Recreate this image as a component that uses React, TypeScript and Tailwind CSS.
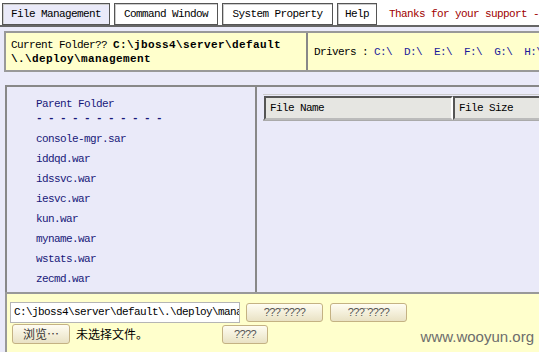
import React from "react";

const mono = "font-['Liberation_Mono','DejaVu_Sans_Mono',monospace] text-[11px] tracking-[-0.6px]";

const tabs = [
  { label: "File Management", w: "w-[108px]", active: true },
  { label: "Command Window", w: "w-[104px]", active: false },
  { label: "System Property", w: "w-[111px]", active: false },
  { label: "Help", w: "w-[40px]", active: false },
];

const files = [
  "console-mgr.sar",
  "iddqd.war",
  "idssvc.war",
  "iesvc.war",
  "kun.war",
  "myname.war",
  "wstats.war",
  "zecmd.war",
];

const drives = ["C:\\", "D:\\", "E:\\", "F:\\", "G:\\", "H:\\"];

const OldButton = ({ children, w }: { children: React.ReactNode; w: string }) => (
  <button
    className={`${w} h-[19px] rounded-[3px] border border-[#c4b283] bg-gradient-to-b from-[#fffdf2] to-[#e9e2c4] text-[#555] text-[11px] font-['Liberation_Sans',Arial,sans-serif] leading-none flex items-center justify-center shrink-0`}
  >
    {children}
  </button>
);

export default function App() {
  return (
    <div className={`relative w-[539px] h-[352px] overflow-hidden bg-[#eaeaf9] text-black ${mono}`}>
      {/* tab bar */}
      <div className="h-[27px] bg-white border-b-2 border-[#666] flex items-start pt-[3px] pl-[2px] gap-[4px] whitespace-nowrap">
        {tabs.map((t) => (
          <div
            key={t.label}
            className={`${t.w} h-[22px] shrink-0 border border-[#555] shadow-[inset_1px_1px_0_#ccc] flex items-center justify-center ${
              t.active ? "bg-[#eaeaf9]" : "bg-white"
            }`}
          >
            {t.label}
          </div>
        ))}
        <div className="ml-[8px] h-[22px] flex items-center text-[#a00000] whitespace-pre">
          Thanks for your support - zecmd
        </div>
      </div>

      {/* current folder */}
      <div className="mt-[4px] ml-[4px] w-[560px] h-[41px] border-2 border-[#999] border-r-0 bg-[#ffffcc] flex">
        <div className="w-[300px] pl-[5px] pt-[5px] leading-[14px]">
          <div className="whitespace-pre">
            Current Folder?? <b className="tracking-[0.4px]">C:\jboss4\server\default</b>
          </div>
          <b className="block tracking-[0.4px]">\.\deploy\management</b>
        </div>
        <div className="flex-1 border-l-2 border-[#888] flex items-center pl-[6px] pt-[2px] whitespace-pre">
          <span>Drivers : </span>
          {drives.map((d) => (
            <span key={d} className="text-[#1b1b9a]">
              {d}{"  "}
            </span>
          ))}
        </div>
      </div>

      {/* browser area */}
      <div className="mt-[13px] ml-[5px] w-[560px] h-[207px] border-t-2 border-l-2 border-[#888] flex">
        <div className="w-[250px] border-r-2 border-[#888] pl-[29px] pt-[8px] text-[#18187a]">
          <div className="h-[18px] flex items-center">Parent Folder</div>
          <div className="h-[10px] flex items-center whitespace-pre font-bold">- - - - - - - - - - -</div>
          <div className="pt-[6px]">
            {files.map((f) => (
              <div key={f} className="h-[20px] flex items-center">
                {f}
              </div>
            ))}
          </div>
        </div>
        <div className="flex-1 pl-[6px] pt-[7px]">
          <div className="flex h-[27px] border-b-2 border-[#aaa] border-t border-t-[#ccc] pt-[1px] pl-[1px]">
            <div className="w-[189px] h-[24px] bg-[#e6e6e2] border-2 border-[#555] border-r-[#fff] border-b-[#bbb] flex items-center pl-[4px]">
              File Name
            </div>
            <div className="flex-1 h-[24px] bg-[#e6e6e2] border-2 border-[#555] border-r-0 border-b-[#bbb] flex items-center pl-[4px]">
              File Size
            </div>
          </div>
        </div>
      </div>

      {/* upload area */}
      <div className="ml-[5px] w-[560px] h-[62px] border-t-2 border-l-2 border-[#999] bg-[#ffffcc] pl-[3px] pt-[8px]">
        <div className="flex items-center gap-[6px]">
          <div className="w-[230px] h-[21px] bg-white border border-[#b5b5b5] flex items-center pl-[3px] overflow-hidden whitespace-nowrap">
            C:\jboss4\server\default\.\deploy\manag
          </div>
          <OldButton w="w-[77px]">???¨????</OldButton>
          <div className="ml-[1px]">
            <OldButton w="w-[77px]">???¨????</OldButton>
          </div>
        </div>
        <div className="flex items-center mt-[1px] pl-[2px]">
          <div className="w-[210px] flex items-center gap-[6px] font-['Noto_Sans_CJK_SC',sans-serif] tracking-normal">
            <button className="w-[58px] h-[20px] rounded-[3px] border border-[#c4b283] bg-gradient-to-b from-[#fffdf2] to-[#e9e2c4] text-[12px] text-[#333] leading-none flex items-center justify-center">
              浏览…
            </button>
            <span className="text-[12px]">未选择文件。</span>
          </div>
          <OldButton w="w-[46px]">????</OldButton>
        </div>
      </div>

      <div className="absolute right-[5px] bottom-[4px] font-['Liberation_Sans',Arial,sans-serif] text-[15px] tracking-normal text-[#6d6d6d]">
        www.wooyun.org
      </div>
    </div>
  );
}
